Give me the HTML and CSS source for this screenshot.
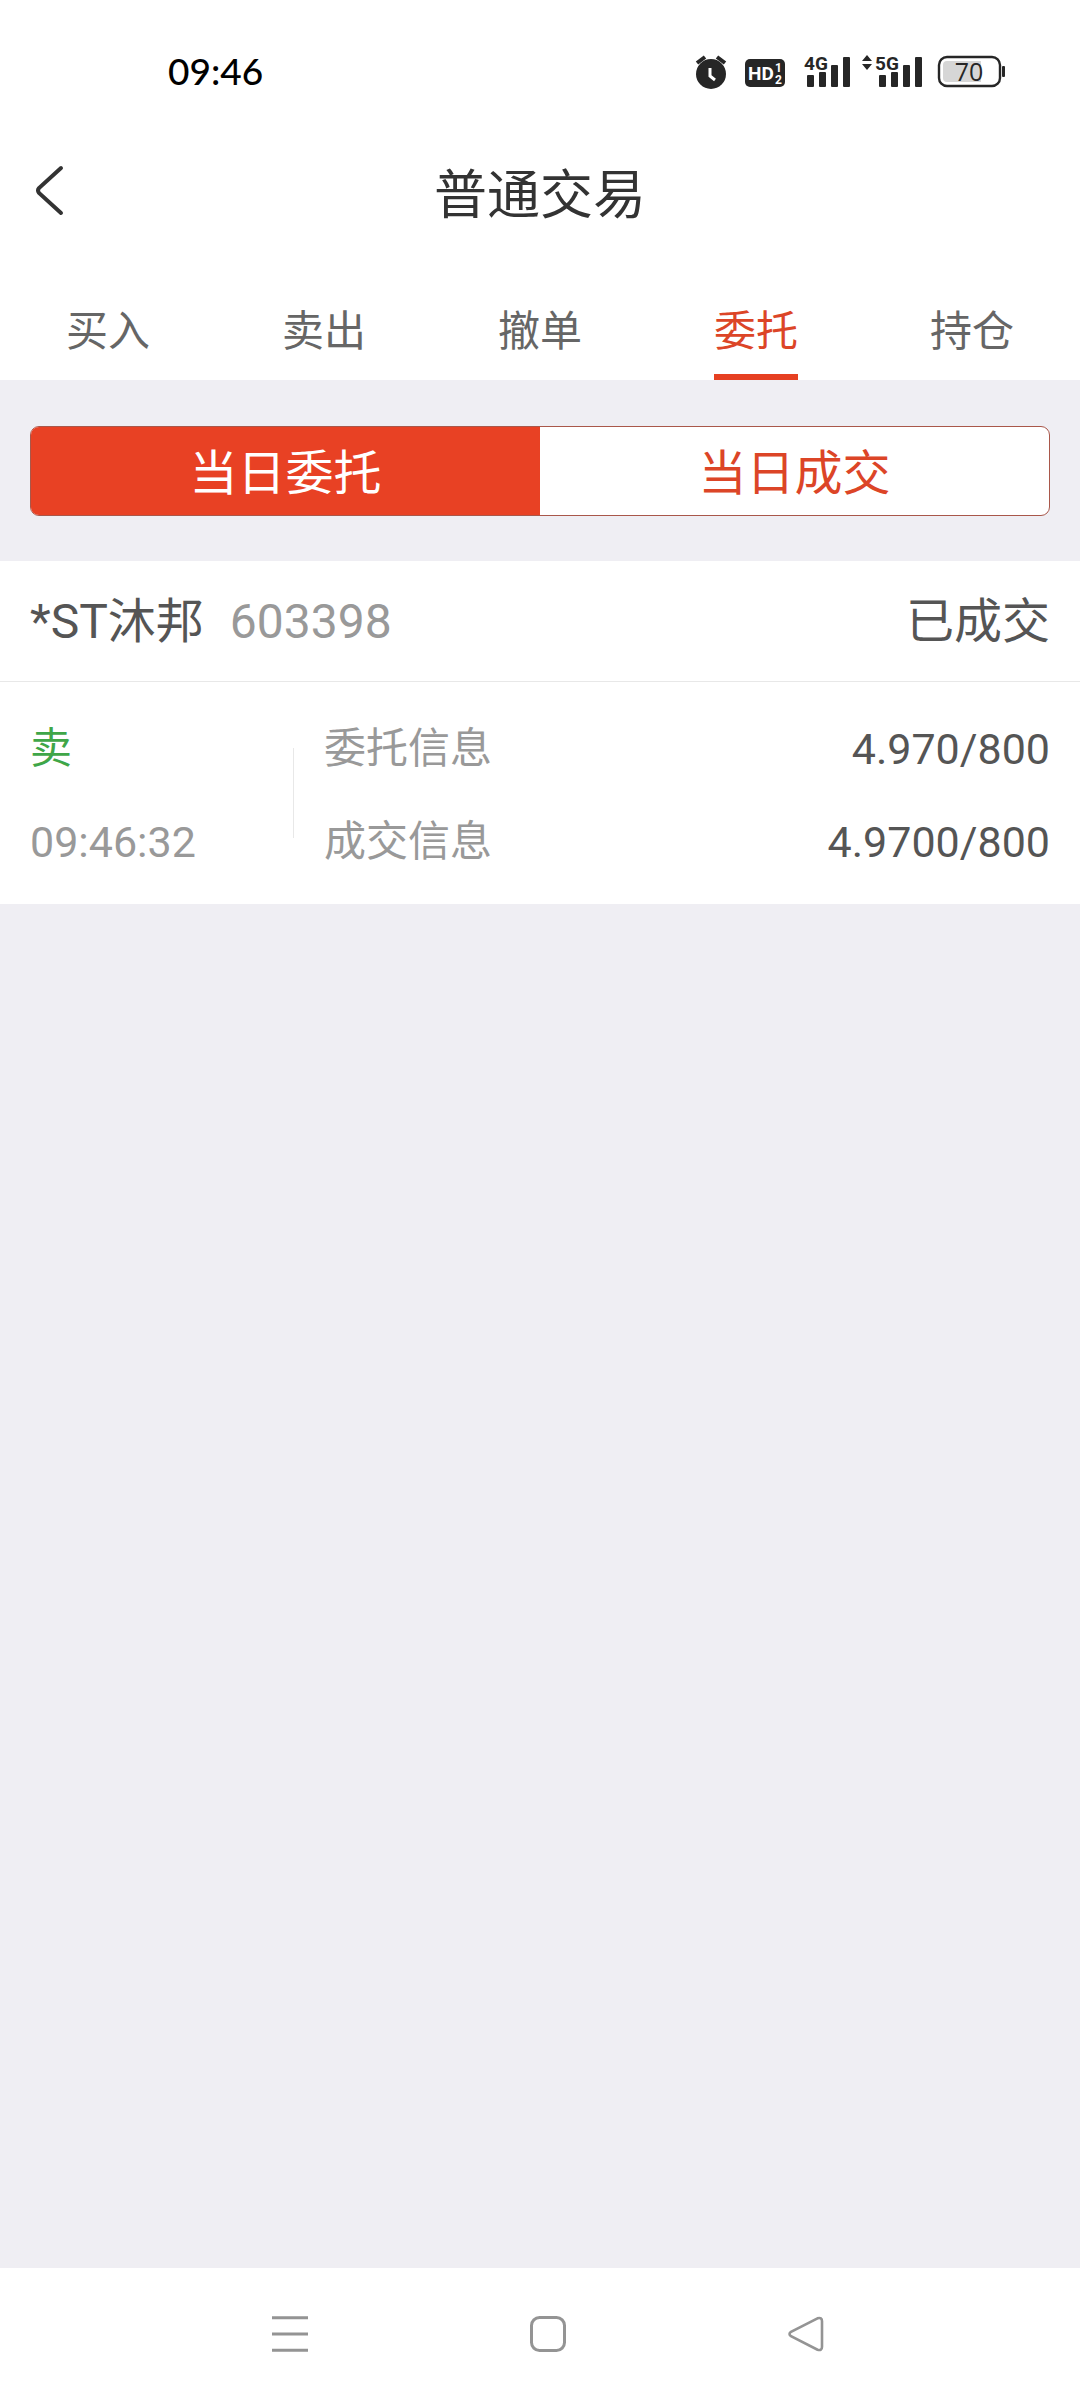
FILE: index.html
```html
<!DOCTYPE html>
<html lang="zh-CN">
<head>
    <meta charset="utf-8">
    <meta name="viewport" content="width=device-width, initial-scale=1">
    <title>普通交易</title>
    <link rel="stylesheet" href="styles.css">
</head>
<body>
    <div class="status-bar">
        <span class="clock">09:46</span>
        <div class="status-icons">
            <!-- alarm -->
            <svg width="39" height="36" viewBox="0 0 39 36">
                <circle cx="17" cy="20" r="15" fill="#262626"/>
                <path d="M3 9l8-6M31 9l-8-6" stroke="#262626" stroke-width="4" fill="none"/>
                <path d="M16 14v8l5 4" stroke="#fff" stroke-width="3" fill="none"/>
            </svg>
            <!-- HD -->
            <svg width="40" height="36" viewBox="0 0 40 36">
                <rect y="5" width="40" height="28" rx="5" fill="#262626"/>
                <text class="hd-text" x="3" y="26">HD</text>
                <text class="sim-text" x="30" y="18">1</text>
                <text class="sim-text" x="30" y="30">2</text>
            </svg>
            <!-- 4G signal -->
            <svg width="53" height="36" viewBox="0 0 53 36">
                <g fill="#262626">
                    <rect x="10" y="21" width="7" height="12" rx="1"/>
                    <rect x="22" y="18" width="7" height="15" rx="1"/>
                    <rect x="34" y="11" width="7" height="22" rx="1"/>
                    <rect x="46" y="3" width="7" height="30" rx="1"/>
                </g>
                <text class="net-text" x="7" y="16">4G</text>
            </svg>
            <!-- 5G signal -->
            <svg width="63" height="36" viewBox="0 0 63 36">
                <g fill="#262626">
                    <path d="M0 7l5-6 5 6zM0 10h10l-5 6z"/>
                    <rect x="17" y="21" width="7" height="12" rx="1"/>
                    <rect x="29" y="18" width="7" height="15" rx="1"/>
                    <rect x="41" y="11" width="7" height="22" rx="1"/>
                    <rect x="53" y="3" width="7" height="30" rx="1"/>
                </g>
                <text class="net-text" x="13" y="16">5G</text>
            </svg>
            <!-- battery -->
            <svg width="69" height="36" viewBox="0 0 69 36">
                <rect x="2" y="3" width="61" height="29" rx="8" fill="none" stroke="#262626" stroke-width="2.4"/>
                <path d="M44 7H10a4 4 0 0 0-4 4v13a4 4 0 0 0 4 4h34z" fill="#d6d6d6"/>
                <rect x="65" y="12" width="3" height="11" rx="1" fill="#262626"/>
                <text class="battery-text" x="32" y="27">70</text>
            </svg>
        </div>
    </div>

    <header class="title-bar">
        <button class="back" type="button" aria-label="返回">
            <svg width="30" height="52" viewBox="0 0 30 52">
                <path d="M26 3L4 23q-2 2.500 0 5L26 48" fill="none" stroke="#333" stroke-width="4" stroke-linecap="round"/>
            </svg>
        </button>
        <h1>普通交易</h1>
    </header>

    <nav class="tabs">
        <a href="#buy">买入</a>
        <a href="#sell">卖出</a>
        <a href="#cancel">撤单</a>
        <a href="#orders" class="active">委托</a>
        <a href="#positions">持仓</a>
    </nav>

    <main>
        <div class="switch">
            <button type="button" class="active">当日委托</button>
            <button type="button">当日成交</button>
        </div>

        <article class="order">
            <div class="order-head">
                <span class="stock-name">*ST沐邦</span>
                <span class="stock-code">603398</span>
                <span class="order-state">已成交</span>
            </div>
            <div class="order-body">
                <div class="order-side">
                    <span class="sell">卖</span>
                    <time>09:46:32</time>
                </div>
                <dl class="order-info">
                    <div class="info-row">
                        <dt>委托信息</dt>
                        <dd>4.970/800</dd>
                    </div>
                    <div class="info-row">
                        <dt>成交信息</dt>
                        <dd>4.9700/800</dd>
                    </div>
                </dl>
            </div>
        </article>
    </main>

    <footer class="system-nav">
        <button type="button" aria-label="最近任务">
            <svg width="36" height="36" viewBox="0 0 36 36">
                <path d="M0 1.700h36M0 18h36M0 34.300h36" stroke="#949494" stroke-width="3"/>
            </svg>
        </button>
        <button type="button" aria-label="主页">
            <svg width="36" height="36" viewBox="0 0 36 36">
                <rect x="1.500" y="1.500" width="33" height="33" rx="8" fill="none" stroke="#949494" stroke-width="3"/>
            </svg>
        </button>
        <button type="button" aria-label="返回">
            <svg width="36" height="36" viewBox="0 0 36 36">
                <path d="M29.500 2.300L3 15.800q-3 2.200 0 4.400L29.500 33.700q4.500 1.500 4.500-3V5.300q0-4.500-4.500-3z" fill="none" stroke="#949494" stroke-width="2.600"/>
            </svg>
        </button>
    </footer>
</body>
</html>
```
FILE: styles.css
```css
* {
    box-sizing: border-box;
}

body {
    margin: 0;
    min-height: 100vh;
    display: flex;
    flex-direction: column;
    background-color: #fff;
    color: #555;
    font-family: Roboto, "Noto Sans CJK SC", sans-serif;
    font-size: 42px;
}

button {
    padding: 0;
    border: none;
    background: none;
    font-family: inherit;
    cursor: pointer;
}

svg {
    display: block;
    overflow: visible;
}

/* status bar */
.status-bar {
    display: flex;
    justify-content: space-between;
    align-items: center;
    height: 108px;
    padding: 36px 74px 0 168px;
}

.clock {
    padding-bottom: 4px;
    color: #000;
    font-family: Lato, sans-serif;
    font-size: 37px;
    font-weight: 500;
}

.status-icons {
    display: flex;
    gap: 12px;
}

.hd-text,
.sim-text,
.net-text {
    font-weight: bold;
    fill: #262626;
}

.hd-text {
    font-size: 19px;
    fill: #fff;
}

.sim-text {
    font-size: 12px;
    fill: #fff;
}

.net-text {
    font-size: 19px;
}

.battery-text {
    font-family: "Open Sans", sans-serif;
    font-size: 25px;
    fill: #262626;
    text-anchor: middle;
}

/* title */
.title-bar {
    display: grid;
    grid-template-columns: 90px 1fr 90px;
    align-items: center;
    height: 166px;
}

.back {
    padding-left: 35px;
}

h1 {
    margin: 0;
    color: #333;
    font-size: 53px;
    font-weight: normal;
    text-align: center;
}

/* tabs */
.tabs {
    display: flex;
    height: 106px;
}

.tabs a {
    flex: 1;
    padding-top: 16px;
    color: #666;
    line-height: 84px;
    text-align: center;
    text-decoration: none;
}

.tabs .active {
    flex: none;
    width: 84px;
    margin: 0 calc((20% - 84px) / 2);
    border-bottom: 6px solid #e64022;
    color: #dc4527;
}

main {
    flex: 1;
    background-color: #efeef3;
}

.switch {
    display: flex;
    height: 90px;
    margin: 46px 30px 45px;
    border: 1px solid #a9574a;
    border-radius: 9px;
    background-color: #fff;
    overflow: hidden;
}

.switch button {
    flex: 1;
    padding-bottom: 4px;
    color: #dc4527;
    font-size: 48px;
}

.switch .active {
    background-color: #e84124;
    color: #fff;
}

/* order card */
.order {
    background-color: #fff;
}

.order-head {
    display: flex;
    height: 121px;
    padding: 0 30px;
    border-bottom: 1px solid #e8e8e8;
    font-size: 48px;
    line-height: 122px;
}

.stock-code {
    margin-left: 26px;
    color: #999;
}

.order-state {
    margin-left: auto;
}

.order-body {
    display: flex;
    padding: 36px 30px 31px;
    line-height: 62px;
}

.order-side,
.order-info {
    display: flex;
    flex-direction: column;
    gap: 31px;
}

.order-side {
    width: 263px;
    color: #999;
}

.sell {
    color: #3fa648;
}

.order-info {
    flex: 1;
    margin: 0;
    padding-left: 31px;
    background: linear-gradient(#e8e8e8, #e8e8e8) no-repeat left 30px / 1px 90px;
}

.info-row {
    display: flex;
    justify-content: space-between;
}

dt {
    color: #999;
}

dd {
    margin: 0;
}

time,
dd {
    font-size: 43px;
}

/* android buttons */
.system-nav {
    display: flex;
    justify-content: center;
    align-items: center;
    gap: 222px;
    height: 132px;
    padding-left: 15px;
}
```
